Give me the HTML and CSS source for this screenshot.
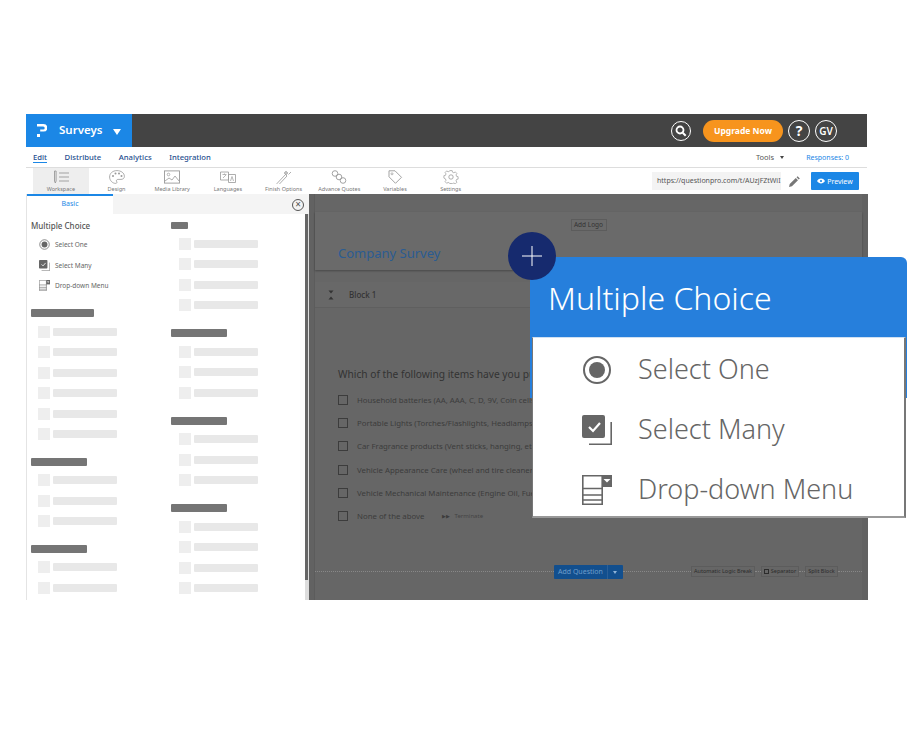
FILE: index.html
```html
<!DOCTYPE html>
<html lang="en">
<head>
    <meta name="viewport" content="width=device-width, initial-scale=1.0">
    <title>Surveys</title>
    <link rel="stylesheet" href="styles.css">
</head>
<body>
    <svg class="defs" width="0" height="0">
        <symbol id="ico-radio" viewBox="0 0 30 30">
            <circle cx="15" cy="15" r="13" fill="none" stroke="currentColor" stroke-width="2"/>
            <circle cx="15" cy="15" r="8" fill="currentColor"/>
        </symbol>
        <symbol id="ico-check" viewBox="0 0 30 30">
            <rect x="0" y="0" width="23" height="23" rx="2" fill="currentColor"/>
            <path d="M7 12l4 4 7-8" fill="none" stroke="#fff" stroke-width="2.2"/>
            <path d="M29.200 7v22.200H7" fill="none" stroke="currentColor" stroke-width="1.600"/>
        </symbol>
        <symbol id="ico-drop" viewBox="0 0 30 30">
            <path d="M.8.8h19.4v28.4H.8z M.8 13.5h19.4 M.8 20h19.4 M.8 25h19.4" fill="none" stroke="currentColor" stroke-width="1.6"/>
            <rect x="20" y="0" width="10" height="12" fill="currentColor"/>
            <path d="M21.5 4h7l-3.5 3.6z" fill="#fff"/>
        </symbol>
    </svg>

    <div class="app">
        <!-- Top bar -->
        <header class="topbar">
            <div class="brand">
                <svg class="logo" viewBox="0 0 10 13"><path d="M0 0h6.5a3.5 3.5 0 0 1 0 7.6H3.2V5.4h3a1.5 1.5 0 0 0 0-3H0z M0 10h3v3H0z" fill="#fff"/></svg>
                <span class="brand-name">Surveys</span>
                <span class="brand-caret"></span>
            </div>
            <div class="top-actions">
                <span class="round-btn search">
                    <svg viewBox="0 0 12 12" width="12" height="12"><circle cx="5" cy="5" r="3.5" fill="none" stroke="#fff" stroke-width="1.8"/><path d="M7.7 7.7l3 3" stroke="#fff" stroke-width="2"/></svg>
                </span>
                <span class="upgrade">Upgrade Now</span>
                <span class="round-btn big help">?</span>
                <span class="round-btn big">GV</span>
            </div>
        </header>

        <!-- Nav -->
        <nav class="navbar">
            <a class="nav-link active">Edit</a>
            <a class="nav-link">Distribute</a>
            <a class="nav-link">Analytics</a>
            <a class="nav-link">Integration</a>
            <span class="nav-tools">Tools</span>
            <span class="nav-caret"></span>
            <span class="nav-responses">Responses: 0</span>
        </nav>

        <!-- Toolbar -->
        <div class="toolbar">
            <div class="tool selected">
                <svg viewBox="0 0 16 14"><path d="M1.5 1v10l.8 2 .8-2V1z M6 3h10 M6 7h10 M6 11h10" fill="none" stroke="currentColor" stroke-width=".9"/></svg>
                <span>Workspace</span>
            </div>
            <div class="tool">
                <svg viewBox="0 0 16 14"><path d="M8 .6C3.5.6.6 3.5.6 7c0 3.500 3 6.400 6 6.400 1.500 0 1.500-1.200 1-2-.6-1.100.2-2 1.400-2h3c1.800 0 3.400-1 3.400-3C15.400 3 12 .6 8 .6z" fill="none" stroke="currentColor" stroke-width=".8"/><circle cx="4" cy="6" r="1" fill="currentColor"/><circle cx="6.500" cy="3.500" r="1" fill="currentColor"/><circle cx="10" cy="3.500" r="1" fill="currentColor"/><circle cx="12.500" cy="6" r="1" fill="currentColor"/></svg>
                <span>Design</span>
            </div>
            <div class="tool">
                <svg viewBox="0 0 16 14"><rect x=".5" y=".9" width="15" height="12.200" fill="none" stroke="currentColor" stroke-width=".9"/><circle cx="4.500" cy="4.500" r="1.300" fill="none" stroke="currentColor" stroke-width=".7"/><path d="M1 11l4-3 3 2 3-4 4 5" fill="none" stroke="currentColor" stroke-width=".8"/></svg>
                <span>Media Library</span>
            </div>
            <div class="tool">
                <svg viewBox="0 0 16 14"><path d="M.5 2h8v8h-8z M8.500 4.500h7v8h-7z" fill="none" stroke="currentColor" stroke-width=".8"/><path d="M2.500 4.500h4 M4.500 3.500v1 M3 8l3-3 M10.500 11l1.500-4.500 1.500 4.500" fill="none" stroke="currentColor" stroke-width=".7"/></svg>
                <span>Languages</span>
            </div>
            <div class="tool">
                <svg viewBox="0 0 16 14"><path d="M1 13.500l8.500-9 1.500 1.500-8.500 9z M10 1l.5 1.500L12 3l-1.500.5L10 5l-.5-1.500L8 3l1.500-.5z M12.500 4.500l2.500-2.500" fill="none" stroke="currentColor" stroke-width=".8"/></svg>
                <span>Finish Options</span>
            </div>
            <div class="tool">
                <svg viewBox="0 0 16 14"><circle cx="4" cy="3.500" r="2.800" fill="none" stroke="currentColor" stroke-width=".9"/><circle cx="8" cy="7" r="2.800" fill="none" stroke="currentColor" stroke-width=".9"/><circle cx="12" cy="10.500" r="2.800" fill="none" stroke="currentColor" stroke-width=".9"/></svg>
                <span>Advance Quotes</span>
            </div>
            <div class="tool">
                <svg viewBox="0 0 16 14"><path d="M2 .8h6l6.500 6.500-6 6L2 6.800z" fill="none" stroke="currentColor" stroke-width=".9"/><circle cx="5" cy="3.800" r="1" fill="none" stroke="currentColor" stroke-width=".7"/></svg>
                <span>Variables</span>
            </div>
            <div class="tool">
                <svg viewBox="0 0 16 14"><circle cx="8" cy="7" r="2.200" fill="none" stroke="currentColor" stroke-width=".8"/><path d="M6.800.6h2.400l.3 1.600 1.400.6 1.400-.9 1.600 1.700-.9 1.300.6 1.500 1.500.3v2.400l-1.500.3-.6 1.500.9 1.300-1.600 1.700-1.400-.9-1.400.6-.3-.1H6.800l-.3-.5-1.400-.6-1.400.9-1.600-1.700.9-1.300-.6-1.500L.9 8.100V5.700l1.500-.3.6-1.500-.9-1.300 1.600-1.700 1.400.9 1.400-.6z" fill="none" stroke="currentColor" stroke-width=".7"/></svg>
                <span>Settings</span>
            </div>
            <div class="toolbar-right">
                <div class="url-box">https://questionpro.com/t/AUzjFZtWiI</div>
                <svg class="pencil" viewBox="0 0 12 12"><path d="M0 12l.8-3.200 6.600-6.600 2.400 2.400-6.600 6.600z M8.200 1.400L9.400.2l2.400 2.400-1.200 1.200z" fill="#777"/></svg>
                <button class="preview">
                    <svg viewBox="0 0 12 8" width="8" height="6"><path d="M0 4c3-5 9-5 12 0-3 5-9 5-12 0z" fill="#fff"/><circle cx="6" cy="4" r="1.600" fill="#1b87e6"/></svg>
                    Preview
                </button>
            </div>
        </div>

        <div class="workspace">
            <!-- Question type panel -->
            <aside class="panel">
                <div class="tabs">
                    <div class="tab active">Basic</div>
                    <div class="tab-rest">
                        <span class="tab-close">&times;</span>
                    </div>
                </div>
                <div class="panel-body">
                    <div class="panel-col">
                        <div class="group">
                            <div class="group-title">Multiple Choice</div>
                            <div class="type"><svg class="type-ico"><use href="#ico-radio"/></svg>Select One</div>
                            <div class="type"><svg class="type-ico"><use href="#ico-check"/></svg>Select Many</div>
                            <div class="type"><svg class="type-ico"><use href="#ico-drop"/></svg>Drop-down Menu</div>
                        </div>
                        <div class="group">
                            <div class="sk-title wide"></div>
                            <div class="sk"><i></i><b></b></div>
                            <div class="sk"><i></i><b></b></div>
                            <div class="sk"><i></i><b></b></div>
                            <div class="sk"><i></i><b></b></div>
                            <div class="sk"><i></i><b></b></div>
                            <div class="sk"><i></i><b></b></div>
                        </div>
                        <div class="group">
                            <div class="sk-title"></div>
                            <div class="sk"><i></i><b></b></div>
                            <div class="sk"><i></i><b></b></div>
                            <div class="sk"><i></i><b></b></div>
                        </div>
                        <div class="group">
                            <div class="sk-title"></div>
                            <div class="sk"><i></i><b></b></div>
                            <div class="sk"><i></i><b></b></div>
                        </div>
                    </div>
                    <div class="panel-col second">
                        <div class="group">
                            <div class="sk-title tiny"></div>
                            <div class="sk"><i></i><b></b></div>
                            <div class="sk"><i></i><b></b></div>
                            <div class="sk"><i></i><b></b></div>
                            <div class="sk"><i></i><b></b></div>
                        </div>
                        <div class="group">
                            <div class="sk-title"></div>
                            <div class="sk"><i></i><b></b></div>
                            <div class="sk"><i></i><b></b></div>
                            <div class="sk"><i></i><b></b></div>
                        </div>
                        <div class="group">
                            <div class="sk-title"></div>
                            <div class="sk"><i></i><b></b></div>
                            <div class="sk"><i></i><b></b></div>
                            <div class="sk"><i></i><b></b></div>
                        </div>
                        <div class="group">
                            <div class="sk-title"></div>
                            <div class="sk"><i></i><b></b></div>
                            <div class="sk"><i></i><b></b></div>
                            <div class="sk"><i></i><b></b></div>
                            <div class="sk"><i></i><b></b></div>
                        </div>
                    </div>
                    <div class="scrollbar"></div>
                </div>
            </aside>

            <!-- Dimmed survey -->
            <main class="stage">
                <div class="stage-inner">
                    <div class="survey-card">
                        <span class="add-logo">Add Logo</span>
                        <div class="survey-title">Company Survey</div>
                    </div>
                    <div class="block-row">
                        <svg class="collapse" viewBox="0 0 6 10" width="6" height="10"><path d="M.5.500h5L3 3.500z M.5 9.500h5L3 6.500z" fill="#333"/></svg>
                        <span>Block 1</span>
                    </div>
                    <div class="question">
                        <div class="question-text">Which of the following items have you purchased in the last 12 months?</div>
                        <div class="option"><i></i>Household batteries (AA, AAA, C, D, 9V, Coin cells)</div>
                        <div class="option"><i></i>Portable Lights (Torches/Flashlights, Headlamps)</div>
                        <div class="option"><i></i>Car Fragrance products (Vent sticks, hanging, etc)</div>
                        <div class="option"><i></i>Vehicle Appearance Care (wheel and tire cleaner)</div>
                        <div class="option"><i></i>Vehicle Mechanical Maintenance (Engine Oil, Fuel)</div>
                        <div class="option"><i></i>None of the above<span class="terminate">&#9654;&#9654;<em>Terminate</em></span></div>
                    </div>
                    <div class="add-row">
                        <span class="dots short"></span>
                        <span class="add-btn">Add Question<u></u></span>
                        <span class="dots"></span>
                        <span class="mini logic">Automatic Logic Break</span>
                        <span class="dots tiny"></span>
                        <span class="mini sep"><s></s>Separator</span>
                        <span class="dots tiny"></span>
                        <span class="mini split">Split Block</span>
                        <span class="dots end"></span>
                    </div>
                </div>
            </main>
        </div>
    </div>

    <!-- Zoomed callout over the screenshot -->
    <div class="callout">
        <div class="callout-head">Multiple Choice</div>
        <div class="callout-body">
            <div class="callout-row"><svg class="callout-ico"><use href="#ico-radio"/></svg>Select One</div>
            <div class="callout-row"><svg class="callout-ico"><use href="#ico-check"/></svg>Select Many</div>
            <div class="callout-row"><svg class="callout-ico"><use href="#ico-drop"/></svg>Drop-down Menu</div>
        </div>
    </div>
    <div class="plus">
        <svg viewBox="0 0 20 20" width="20" height="20"><path d="M10 0v20 M0 10h20" stroke="#fff" stroke-width="1"/></svg>
    </div>
</body>
</html>
```

FILE: styles.css
```css
* {
    box-sizing: border-box;
}
body {
    margin: 0;
    background-color: white;
    font-family: "Noto Sans", "Open Sans", sans-serif;
    height: 750px;
    overflow: hidden;
    position: relative;
}
.defs {
    position: absolute;
}
.app {
    margin: 114px 0 0 26px;
    width: 842px;
    height: 486px;
    overflow: hidden;
    display: flex;
    flex-direction: column;
}
/* Top bar */
.topbar {
    height: 33px;
    width: 841px;
    background-color: #444;
    display: flex;
    justify-content: space-between;
    align-items: center;
}
.brand {
    width: 106px;
    height: 33px;
    background-color: #1b87e6;
    display: flex;
    align-items: center;
    padding-left: 11px;
}
.logo {
    width: 10px;
    height: 13px;
}
.brand-name {
    color: white;
    font-size: 11.500px;
    font-weight: 600;
    margin: -2px 0 0 12px;
}
.brand-caret {
    border-left: 4.5px solid transparent;
    border-right: 4.5px solid transparent;
    border-top: 6px solid white;
    margin-left: 11px;
    margin-top: 2px;
}
.top-actions {
    display: flex;
    align-items: center;
    padding-right: 30px;
}
.round-btn {
    width: 20px;
    height: 20px;
    border: 1px solid white;
    border-radius: 50%;
    color: white;
    display: flex;
    align-items: center;
    justify-content: center;
    font-size: 10px;
    font-weight: 600;
}
.round-btn.big {
    width: 22px;
    height: 22px;
    margin-left: 5px;
}
.help {
    font-size: 14px;
    font-weight: 700;
}
.upgrade {
    width: 80px;
    height: 22px;
    margin-left: 12px;
    border-radius: 11px;
    background-color: #f7941d;
    color: white;
    font-size: 8.500px;
    font-weight: 700;
    display: flex;
    align-items: center;
    justify-content: center;
}
/* Nav */
.navbar {
    height: 21px;
    width: 841px;
    border-bottom: 1px solid #ddd;
    display: flex;
    align-items: center;
    padding-left: 7px;
    font-size: 7.700px;
}
.nav-link {
    color: #1f4f8f;
    font-weight: 500;
    margin-right: 17.500px;
}
.nav-link.active {
    border-bottom: 1px solid #1b87e6;
}
.nav-tools {
    margin-left: auto;
    color: #555;
    font-size: 7.500px;
}
.nav-caret {
    border-left: 2.5px solid transparent;
    border-right: 2.5px solid transparent;
    border-top: 3px solid #444;
    margin: 0 22px 0 6px;
}
.nav-responses {
    color: #1b87e6;
    font-size: 7px;
    margin-right: 18px;
}
/* Toolbar */
.toolbar {
    height: 26px;
    width: 841px;
    display: flex;
    padding-left: 7px;
}
.tool {
    width: 55.700px;
    display: flex;
    flex-direction: column;
    align-items: center;
    padding-top: 2px;
    color: #999;
    font-size: 5.500px;
    white-space: nowrap;
}
.tool svg {
    width: 16px;
    height: 14px;
    margin-bottom: 1px;
}
.tool span {
    color: #777;
}
.tool.selected {
    background-color: #eee;
}
.toolbar-right {
    margin-left: auto;
    display: flex;
    align-items: center;
    padding-right: 8px;
}
.url-box {
    width: 129px;
    height: 18px;
    line-height: 18px;
    padding-left: 5px;
    background-color: #f3f3f3;
    color: #555;
    font-size: 7px;
    overflow: hidden;
    white-space: nowrap;
}
.pencil {
    width: 11px;
    height: 11px;
    margin: 0 11px 0 8px;
}
.preview {
    width: 48px;
    height: 18px;
    padding: 0;
    border: none;
    border-radius: 1px;
    background-color: #1b87e6;
    color: white;
    font-family: inherit;
    font-size: 7px;
}
/* Workspace */
.workspace {
    flex: 1;
    display: flex;
    min-height: 0;
}
.panel {
    width: 283px;
    border-left: 1px solid #e4e4e4;
    display: flex;
    flex-direction: column;
}
.tabs {
    height: 20px;
    display: flex;
}
.tab {
    width: 86px;
    border-top: 2px solid #1b87e6;
    color: #1b87e6;
    font-size: 7px;
    text-align: center;
    line-height: 16px;
}
.tab-rest {
    flex: 1;
    background-color: #f4f4f4;
    display: flex;
    justify-content: flex-end;
    align-items: center;
    padding: 2px 5px 0 0;
}
.tab-close {
    width: 12px;
    height: 12px;
    border: 1px solid #555;
    border-radius: 50%;
    color: #555;
    font-size: 10px;
    line-height: 9px;
    text-align: center;
}
.panel-body {
    flex: 1;
    display: flex;
    position: relative;
    min-height: 0;
    overflow: hidden;
}
.panel-col {
    width: 140px;
    padding: 7px 0 0 4px;
    display: flex;
    flex-direction: column;
    gap: 17.500px;
}
.panel-col.second {
    padding-top: 8px;
    gap: 18px;
}
.group {
    display: flex;
    flex-direction: column;
    gap: 8.500px;
}
.group-title {
    color: #555;
    font-size: 8px;
    font-weight: 500;
    height: 9px;
    line-height: 10px;
}
.type {
    height: 12px;
    padding-left: 8px;
    display: flex;
    align-items: center;
    gap: 5px;
    color: #666;
    font-size: 6.500px;
    white-space: nowrap;
}
.type-ico {
    width: 11px;
    height: 11px;
    color: #666;
}
.sk-title {
    width: 56px;
    height: 8px;
    border-radius: 1px;
    background-color: #757575;
}
.sk-title.wide {
    width: 63px;
}
.sk-title.tiny {
    width: 17px;
    height: 7px;
}
.sk {
    height: 12px;
    padding-left: 7px;
    display: flex;
    align-items: center;
    gap: 3px;
}
.second .sk {
    padding-left: 8px;
}
.sk i {
    width: 12px;
    height: 12px;
    background-color: #eee;
}
.sk b {
    width: 64px;
    height: 8px;
    border-radius: 1px;
    background-color: #e8e8e8;
}
.scrollbar {
    position: absolute;
    top: 0;
    bottom: 0;
    right: 0;
    width: 4px;
    background: linear-gradient(#666 366px, #ddd 366px);
    border-right: 1px solid #ddd;
}
/* Dimmed stage */
.stage {
    width: 559px;
    background-color: #626262;
    padding: 0 6px 0 5px;
}
.stage-inner {
    height: 100%;
    background-color: #666;
    border-left: 1px solid #5c5c5c;
    display: flex;
    flex-direction: column;
}
.survey-card {
    margin-top: 18px;
    height: 58px;
    background-color: #6a6a6a;
    box-shadow: 0 1px 2px rgba(0, 0, 0, 0.3);
    display: flex;
    flex-direction: column;
    align-items: center;
    padding-top: 7px;
}
.add-logo {
    height: 12px;
    width: 36px;
    border: 1px solid #5c5c5c;
    color: #333;
    font-size: 6.500px;
    line-height: 10px;
    text-align: center;
    white-space: nowrap;
}
.survey-title {
    align-self: flex-start;
    margin: 13px 0 0 23px;
    color: #2a5c92;
    font-size: 13px;
}
.block-row {
    margin-top: 12px;
    height: 26px;
    background-color: #686868;
    border-bottom: 1px solid #5f5f5f;
    display: flex;
    align-items: center;
    gap: 15px;
    padding-left: 13px;
    color: #333;
    font-size: 8px;
    font-weight: 500;
}
.question {
    width: 218px;
    padding: 59px 0 0 23px;
    color: #333;
    white-space: nowrap;
    overflow: hidden;
}
.question-text {
    font-size: 10.200px;
    height: 14px;
    line-height: 14px;
    margin-bottom: 12.500px;
}
.option {
    display: flex;
    align-items: center;
    gap: 9px;
    height: 12px;
    margin-bottom: 11.400px;
    color: #3c3c3c;
    font-size: 7.800px;
}
.option i {
    width: 10px;
    height: 10px;
    flex: none;
    border: 1px solid #3c3c3c;
}
.terminate {
    margin-left: 9px;
    font-size: 5px;
}
.terminate em {
    font-style: normal;
    font-size: 6px;
    margin-left: 4px;
    color: #444;
}
.add-row {
    margin-top: 31px;
    height: 14px;
    display: flex;
    align-items: center;
}
.dots {
    flex: 1;
    border-top: 1px dotted #888;
}
.dots.short {
    flex: 0 0 239px;
}
.dots.tiny {
    flex: 0 0 6px;
}
.dots.end {
    flex: 0 0 24px;
}
.add-btn {
    width: 69px;
    height: 14px;
    border-radius: 1px;
    background-color: #124f8e;
    color: #6f9ecb;
    font-size: 7px;
    line-height: 14px;
    padding-left: 4px;
    position: relative;
}
.add-btn u {
    position: absolute;
    right: 0;
    top: 0;
    width: 16px;
    height: 14px;
    border-left: 1px solid #2a5f98;
}
.add-btn u::after {
    content: "";
    position: absolute;
    left: 5px;
    top: 6px;
    border-left: 2.500px solid transparent;
    border-right: 2.500px solid transparent;
    border-top: 3px solid #8fb4d8;
}
.mini {
    height: 11px;
    border: 1px solid #5c5c5c;
    color: #2c2c2c;
    font-size: 5.500px;
    line-height: 9px;
    white-space: nowrap;
    display: flex;
    align-items: center;
    justify-content: center;
    gap: 2px;
}
.mini.logic {
    width: 64px;
}
.mini.sep {
    width: 38px;
}
.mini.split {
    width: 33px;
}
.mini s {
    width: 5px;
    height: 5px;
    border: 1px solid #2c2c2c;
}
/* Callout */
.callout {
    position: absolute;
    left: 530px;
    top: 257px;
    width: 377px;
    border-top-right-radius: 6px;
    background: linear-gradient(#267fdc 141px, transparent 141px);
}
.callout-head {
    height: 80px;
    padding: 21px 0 0 18px;
    color: white;
    font-size: 32px;
    font-weight: 300;
    line-height: 40px;
    white-space: nowrap;
}
.callout-body {
    margin: 0 1px 0 2px;
    height: 181px;
    background-color: white;
    border-top: 1px solid #cfe0f2;
    border-right: 2px solid #777;
    border-bottom: 2px solid #999;
    border-left: 1px solid #777;
    padding: 10px 0 0 49px;
    display: flex;
    flex-direction: column;
    gap: 20px;
}
.callout-row {
    height: 40px;
    display: flex;
    align-items: center;
    gap: 26px;
    color: #666;
    font-size: 27px;
    font-weight: 300;
    white-space: nowrap;
}
.callout-ico {
    width: 30px;
    height: 30px;
    flex: none;
    margin-top: 4px;
    color: #666;
}
.plus {
    position: absolute;
    left: 508px;
    top: 232px;
    width: 48px;
    height: 48px;
    border-radius: 50%;
    background-color: #162a6e;
    display: flex;
    align-items: center;
    justify-content: center;
}
```
